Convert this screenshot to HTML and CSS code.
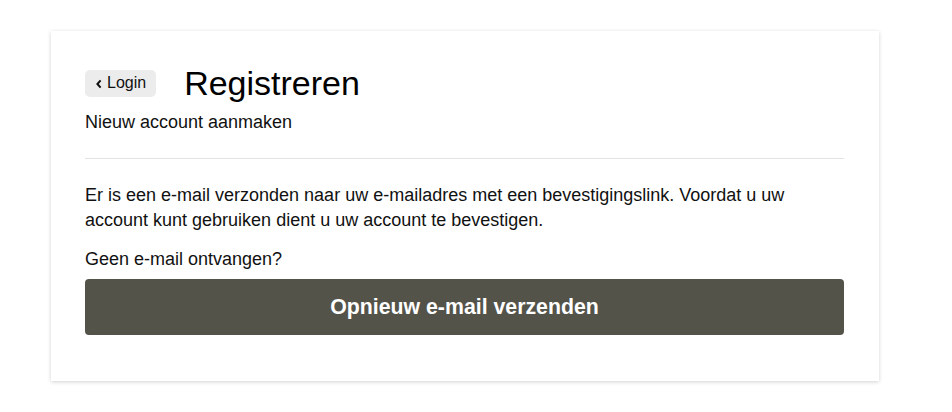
FILE: index.html
```html
<!DOCTYPE html>
<html lang="nl">
<head>
<meta charset="utf-8">
<title>Registreren</title>
<link rel="stylesheet" href="styles.css">
</head>
<body>
<main class="page">
  <section class="card">
    <header class="head">
      <a class="back" href="#"><svg class="chev" width="8" height="10" viewBox="0 0 8 10"><path d="M5.6 1.4 L2.4 5 L5.6 8.6" fill="none" stroke="#111" stroke-width="2"/></svg>Login</a>
      <h1 class="title">Registreren</h1>
    </header>
    <p class="sub">Nieuw account aanmaken</p>
    <hr class="rule">
    <p class="msg">Er is een e-mail verzonden naar uw e-mailadres met een bevestigingslink. Voordat u uw account kunt gebruiken dient u uw account te bevestigen.</p>
    <p class="q">Geen e-mail ontvangen?</p>
    <button class="resend" type="button">Opnieuw e-mail verzenden</button>
  </section>
</main>
</body>
</html>
```
FILE: styles.css
```css
html, body {
  margin: 0;
  background: #fff;
  font-family: "Liberation Sans", Arial, sans-serif;
  color: #111;
}
.page {
  padding: 31px 73px 20px 51px;
}
.card {
  width: 828px;
  box-sizing: border-box;
  height: 350px;
  background: #fff;
  box-shadow: 0 1px 4px rgba(0,0,0,0.18);
  padding: 32px 35px 0 34px;
}
.head {
  display: flex;
  align-items: center;
  gap: 28px;
}
.back {
  display: flex;
  align-items: center;
  gap: 4px;
  height: 27px;
  padding: 0 10px 0 10px;
  background: #ececec;
  border-radius: 5px;
  color: #111;
  text-decoration: none;
  font-size: 16px;
}
.chev { margin-top: 1px; }
.title {
  margin: 0;
  font-size: 34px;
  font-weight: normal;
  line-height: 40px;
  color: #000;
}
.sub {
  margin: 7px 0 0;
  font-size: 18px;
  line-height: 24px;
}
.rule {
  margin: 24px 0 0;
  border: 0;
  border-top: 1px solid #e3e3e3;
}
.msg {
  margin: 24px 0 0;
  font-size: 18px;
  line-height: 25px;
}
.q {
  margin: 15px 0 0;
  font-size: 18px;
  line-height: 22px;
}
.resend {
  display: block;
  width: 100%;
  height: 56px;
  margin-top: 9px;
  border: 0;
  border-radius: 4px;
  background: #54534a;
  color: #fff;
  font-family: "Liberation Sans", Arial, sans-serif;
  font-weight: bold;
  font-size: 21.3px;
}
```
